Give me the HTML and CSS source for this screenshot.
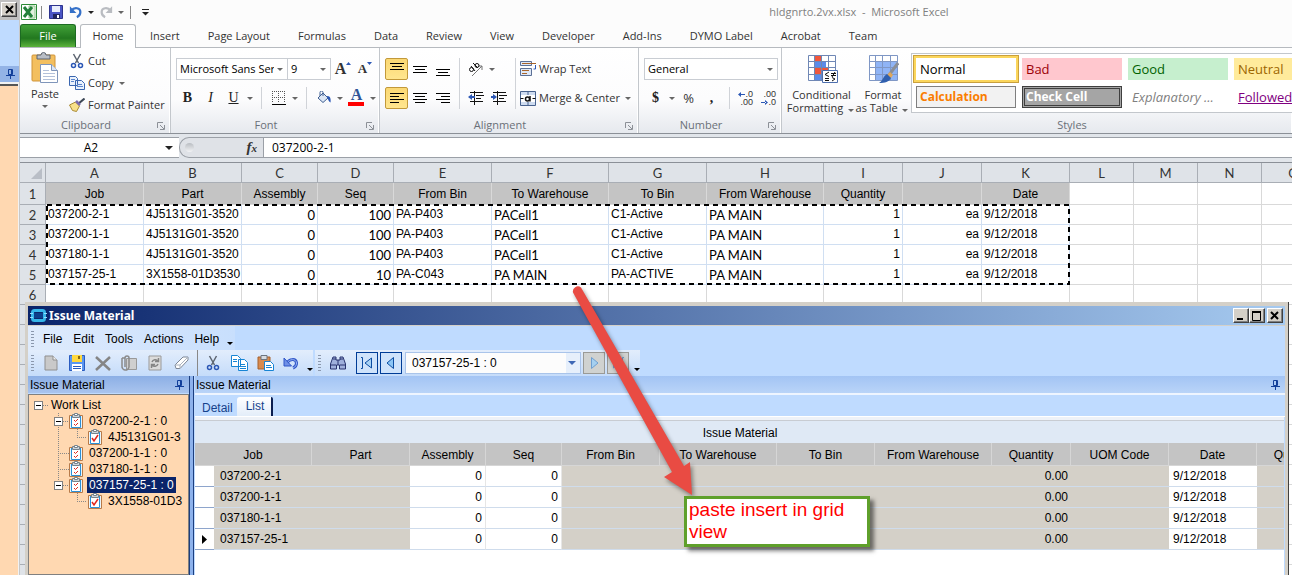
FILE: index.html
```
<!DOCTYPE html>
<html lang="en">
<head>
  <meta charset="UTF-8">
  <meta name="viewport" content="width=device-width, initial-scale=1.0">
  <title>hldgnrto.2vx.xlsx - Microsoft Excel</title>
  <link rel="stylesheet" href="styles.css">
</head>
<body>

<!-- shared icons -->
<svg class="defs" aria-hidden="true">
  <symbol id="pin" viewBox="0 0 9 10">
    <path d="M2.5 0.5h4v5h-4zM0 6.5h9M4.5 6v4M5.5 1v5" fill="none" stroke="#123f9a"/>
  </symbol>
  <symbol id="launcher" viewBox="0 0 8 8">
    <path d="M0.5 6V0.5H6" fill="none" stroke="#8c9097"/>
    <path d="M3 3l4 4M7.5 3v4.5H3" fill="none" stroke="#8c9097"/>
  </symbol>
  <symbol id="task" viewBox="0 0 14 16">
    <path d="M0.5 2.500h13v13h-13z" fill="#e9f6fd" stroke="#b87a48"/>
    <path d="M2.500 3v11.500h9V3" fill="#fff" stroke="#2b8fd6"/>
    <path d="M3.500 1.500h7v3h-7z" fill="#cfd6dc" stroke="#77838c"/>
    <path d="M5.500 0.500h3v2h-3z" fill="#fff" stroke="#77838c"/>
  </symbol>
  <symbol id="cut" viewBox="0 0 16 16">
    <path d="M4.500 1L9.500 10M11.500 1L6.500 10" stroke="#5c6470" stroke-width="1.500" fill="none"/>
    <circle cx="4.500" cy="12.500" r="2" fill="none" stroke="#2b57b5" stroke-width="1.500"/>
    <circle cx="11.500" cy="12.500" r="2" fill="none" stroke="#2b57b5" stroke-width="1.500"/>
  </symbol>
  <symbol id="undo" viewBox="0 0 16 16">
    <path d="M2.500 6.500C6 2 13 3 13 8c0 3-2 5-4 6" fill="none" stroke="currentColor" stroke-width="2.500"/>
    <path d="M1 1.500v7.500h7.500z" fill="currentColor"/>
  </symbol>
</svg>

<!-- docked strip on the left -->
<aside class="dock">
  <div class="dock-top"><button class="classic-btn" aria-label="Close"><svg width="9" height="9" viewBox="0 0 9 9"><path d="M1 1l7 7M8 1l-7 7" stroke="#000" stroke-width="2"/></svg></button></div>
  <div class="dock-blue"></div>
  <div class="dock-pin"><svg width="9" height="10"><use href="#pin"/></svg></div>
  <div class="dock-body"></div>
</aside>

<main class="excel">
  <header class="titlebar">
    <svg width="16" height="16" viewBox="0 0 16 16"><path d="M0.500 0.500h15v15H0.500z" fill="#fff" stroke="#2c8a36"/><path d="M8 2h6v12H8z" fill="#e3f1df" stroke="#8dc48a"/><path d="M3 3l8 10M11 3L3 13" stroke="#23803a" stroke-width="3"/></svg>
    <i class="qat-line"></i>
    <button aria-label="Save"><svg width="14" height="14" viewBox="0 0 14 14"><path d="M0.500 0.500h13v13H0.500z" fill="#4a55c4" stroke="#2d338c"/><path d="M3 1h8v6H3z" fill="#e8edfb"/><path d="M4 9h7v5H4z" fill="#20265e"/><path d="M8 10h2v3H8z" fill="#fff"/></svg></button>
    <button class="blue" aria-label="Undo"><svg width="14" height="14"><use href="#undo"/></svg></button>
    <i class="caret dark"></i>
    <button class="grey flip" aria-label="Redo"><svg width="14" height="14"><use href="#undo"/></svg></button>
    <i class="caret"></i>
    <i class="qat-line"></i>
    <button aria-label="Customize"><svg width="7" height="7" viewBox="0 0 7 7"><path d="M0 0.500h7" stroke="#222"/><path d="M0 3h7L3.500 6.500z" fill="#222"/></svg></button>
    <h1>hldgnrto.2vx.xlsx&nbsp; -&nbsp; Microsoft Excel</h1>
  </header>

  <nav class="tabs">
    <button class="file">File</button>
    <button class="active">Home</button>
    <button>Insert</button>
    <button>Page Layout</button>
    <button>Formulas</button>
    <button>Data</button>
    <button>Review</button>
    <button>View</button>
    <button>Developer</button>
    <button>Add-Ins</button>
    <button>DYMO Label</button>
    <button>Acrobat</button>
    <button>Team</button>
  </nav>

  <div class="ribbon">
    <section class="group clipboard">
      <div class="group-body">
        <button class="big paste">
          <svg width="28" height="32" viewBox="0 0 28 32"><rect x="1" y="3" width="23" height="26" rx="1" fill="#f3bf5f" stroke="#d0943a"/><path d="M6 3h4a2.500 2.500 0 0 1 5 0h4v4H6z" fill="#b9bec6" stroke="#5c6470"/><path d="M9.500 12.500h11l6 6v12h-17z" fill="#fff" stroke="#7f95ba"/><path d="M20.500 12.500v6h6" fill="#dce6f5" stroke="#7f95ba"/><path d="M12 18.500h6M12 21.500h12M12 24.500h12M12 27.500h12" stroke="#b3c1da"/></svg>
          <span>Paste</span><i class="caret"></i>
        </button>
        <div class="stack">
          <button><svg width="16" height="16"><use href="#cut"/></svg>Cut</button>
          <button><svg width="16" height="14" viewBox="0 0 16 14"><path d="M0.500 0.500h6l2 2v7h-8zM6.500 4.500h6l3 3v6h-9z" fill="#eaf1fc" stroke="#3a66b0"/><path d="M2 3.500h4M2 5.500h3M8 8.500h5M8 10.500h6" stroke="#5c86cc"/></svg>Copy <i class="caret"></i></button>
          <button><svg width="16" height="14" viewBox="0 0 16 14"><path d="M15.500 0.500L9 6" stroke="#3d4756" stroke-width="2"/><path d="M0.500 7l6-3 4 4-3 5.500-4-1z" fill="#f8e08a" stroke="#a88a34"/><path d="M7 3l4 4" stroke="#7a6bb0" stroke-width="2.500"/></svg>Format Painter</button>
        </div>
      </div>
      <h2>Clipboard<svg width="8" height="8"><use href="#launcher"/></svg></h2>
    </section>

    <section class="group font">
      <div class="group-body rows">
        <div class="row">
          <span class="combo family"><select aria-label="Font"><option>Microsoft Sans Serif</option></select></span>
          <span class="combo size"><select aria-label="Font size"><option>9</option></select></span>
          <button class="tool letter" aria-label="Grow font">A<svg width="5" height="3" viewBox="0 0 5 3"><path d="M0 3h5L2.500 0z" fill="#2b57b5"/></svg></button>
          <button class="tool letter small" aria-label="Shrink font">A<svg width="5" height="3" viewBox="0 0 5 3"><path d="M0 0h5L2.500 3z" fill="#2b57b5"/></svg></button>
        </div>
        <div class="row">
          <button class="tool serif"><b>B</b></button>
          <button class="tool serif"><em>I</em></button>
          <button class="tool serif"><u>U</u></button>
          <i class="caret"></i><i class="sep"></i>
          <button class="tool" aria-label="Borders"><svg width="14" height="14" viewBox="0 0 14 14"><path d="M0.500 0v12M6.500 0v12M12.500 0v12M0 0.500h13M0 6.500h13" stroke="#555" stroke-dasharray="1 1"/><path d="M0 13.500h14" stroke="#000"/></svg></button>
          <i class="caret"></i><i class="sep"></i>
          <button class="tool" aria-label="Fill color"><svg width="16" height="14" viewBox="0 0 16 14"><path d="M2 7l5-5 5 5-5 4.500z" fill="#dde7f5" stroke="#3f5f92"/><path d="M7 5V1.500a1.500 1.500 0 0 0-3 0V5" fill="none" stroke="#3f5f92"/><path d="M11 5c3 0 4 2 3.500 6.500C13 11 12 9 11 5z" fill="#2b57b5"/></svg></button>
          <i class="caret"></i>
          <button class="tool fontcolor" aria-label="Font color">A</button>
          <i class="caret"></i>
        </div>
      </div>
      <h2>Font<svg width="8" height="8"><use href="#launcher"/></svg></h2>
    </section>

    <section class="group align">
      <div class="group-body">
        <div class="rows">
          <div class="row">
            <button class="tool on" aria-label="Top align"><svg width="14" height="14" viewBox="0 0 14 14"><path d="M0 1.500h14M2 4.500h10M0 7.500h14" stroke="#000"/></svg></button>
            <button class="tool" aria-label="Middle align"><svg width="14" height="14" viewBox="0 0 14 14"><path d="M0 4.500h14M2 7.500h10M0 10.500h14" stroke="#000"/></svg></button>
            <button class="tool" aria-label="Bottom align"><svg width="14" height="14" viewBox="0 0 14 14"><path d="M0 7.500h14M2 10.500h10M0 13.500h14" stroke="#000"/></svg></button>
          </div>
          <div class="row">
            <button class="tool on" aria-label="Align left"><svg width="14" height="12" viewBox="0 0 14 12"><path d="M0 1.500h14M0 4.500h9M0 7.500h14M0 10.500h9" stroke="#000"/></svg></button>
            <button class="tool" aria-label="Center"><svg width="14" height="12" viewBox="0 0 14 12"><path d="M0 1.500h14M2 4.500h10M0 7.500h14M2 10.500h10" stroke="#000"/></svg></button>
            <button class="tool" aria-label="Align right"><svg width="14" height="12" viewBox="0 0 14 12"><path d="M0 1.500h14M5 4.500h9M0 7.500h14M5 10.500h9" stroke="#000"/></svg></button>
          </div>
        </div>
        <i class="sep tall"></i>
        <div class="rows">
          <div class="row">
            <button class="tool" aria-label="Orientation"><svg width="16" height="16" viewBox="0 0 16 16"><path d="M4 15L14 5M14 9V5h-4" stroke="#777" fill="none"/><circle cx="3.500" cy="8.500" r="2" fill="none" stroke="#111"/><path d="M3 5l4 5M5 2l5 5" stroke="#111"/><circle cx="9" cy="4.500" r="2" fill="none" stroke="#111"/></svg></button>
            <i class="caret"></i>
          </div>
          <div class="row">
            <button class="tool" aria-label="Decrease indent"><svg width="16" height="14" viewBox="0 0 16 14"><path d="M2 1.500h13M8 4.500h8M8 7.500h5M2 10.500h13M6.500 0v14" stroke="#111"/><path d="M0 6l4-3v6z" fill="#2b57b5"/><path d="M3 6h4" stroke="#2b57b5" stroke-width="2"/></svg></button>
            <button class="tool" aria-label="Increase indent"><svg width="16" height="14" viewBox="0 0 16 14"><path d="M2 1.500h13M8 4.500h8M8 7.500h5M2 10.500h13M6.500 0v14" stroke="#111"/><path d="M6 6L2 3v6z" fill="#2b57b5"/><path d="M0 6h3" stroke="#2b57b5" stroke-width="2"/></svg></button>
          </div>
        </div>
        <i class="sep tall"></i>
        <div class="rows">
          <button class="wide"><svg width="16" height="16" viewBox="0 0 16 16"><path d="M0.500 0.500h11v4H0.500zM0.500 7.500h11v7H0.500z" fill="#dfe8f6" stroke="#5b7097"/><path d="M2 2.500h14M2 9.500h7M2 12.500h5" stroke="#a8642a"/><path d="M15.500 4v4h-2" stroke="#2b57b5" fill="none"/></svg>Wrap Text</button>
          <button class="wide"><svg width="16" height="15" viewBox="0 0 16 15"><path d="M0.500 0.500h15v14H0.500zM8 0v4M8 11v4" fill="#cfdcf0" stroke="#49638f"/><path d="M1 4h14v7H1z" fill="#fff"/><path d="M0.500 7.500h3M12.500 7.500h3" stroke="#111"/><circle cx="7.500" cy="8" r="2" fill="none" stroke="#111" stroke-width="1.500"/><path d="M10 5v5.500" stroke="#111" stroke-width="1.500"/></svg>Merge &amp; Center <i class="caret"></i></button>
        </div>
      </div>
      <h2>Alignment<svg width="8" height="8"><use href="#launcher"/></svg></h2>
    </section>

    <section class="group number">
      <div class="group-body rows">
        <div class="row">
          <span class="combo format"><select aria-label="Number format"><option>General</option></select></span>
        </div>
        <div class="row">
          <button class="tool serif"><b>$</b></button>
          <i class="caret"></i>
          <button class="tool percent">%</button>
          <button class="tool serif"><b>,</b></button>
          <i class="sep"></i>
          <button class="tool decimal"><span><svg width="7" height="5" viewBox="0 0 7 5"><path d="M0 2.500L3 0v5zM2 2h5v1H2z" fill="#2b57b5"/></svg>.0</span><span>.00</span></button>
          <button class="tool decimal"><span>.00</span><span><svg width="7" height="5" viewBox="0 0 7 5"><path d="M7 2.500L4 0v5zM0 2h5v1H0z" fill="#2b57b5"/></svg>.0</span></button>
        </div>
      </div>
      <h2>Number<svg width="8" height="8"><use href="#launcher"/></svg></h2>
    </section>

    <section class="group styles">
      <div class="group-body">
        <button class="big conditional">
          <svg width="32" height="32" viewBox="0 0 32 32"><path d="M2.500 2.500h27v25h-27z" fill="#fff"/><path d="M9 2h7v7H9zM9 15h13v6H9z" fill="#f0563c"/><path d="M9 9h11v6H9zM9 21h8v6H9z" fill="#5b8bea"/><path d="M2.500 2.500h27v25h-27zM2 8.500h28M2 14.500h28M2 21.500h28M8.500 2v26M15.500 2v26M22.500 2v26" fill="none" stroke="#6f87b5"/><path d="M16.500 17.500h15v12h-15z" fill="#fff" stroke="#4d6fae"/><path d="M23 19l-4 2.500 4 2M19 25.500h4M25 20.500h5M25 22.500h5M29 19l-3 5M19 27.500h4M26 24.500l3 1.500-3 2" fill="none" stroke="#111"/></svg>
          <span>Conditional<br>Formatting <i class="caret"></i></span>
        </button>
        <button class="big table">
          <svg width="32" height="32" viewBox="0 0 32 32"><path d="M2.500 2.500h28v25h-28z" fill="#fff"/><path d="M9 9h21v19H9z" fill="#8fb4f6"/><path d="M2.500 2.500h28v25h-28zM2 8.500h28M2 14.500h28M2 21.500h28M8.500 2v26M15.500 2v26M23.500 2v26" fill="none" stroke="#7f97c5"/><path d="M31 10L22 22" stroke="#8a8f98" stroke-width="3"/><path d="M23 19l3 3-2 3-4-3z" fill="#e0a85c"/><path d="M20 21l4 4c-2 4-6 5-12 5 4-2 4-7 8-9z" fill="#2f5fae"/></svg>
          <span>Format<br>as Table <i class="caret"></i></span>
        </button>
        <div class="gallery">
          <button class="st normal">Normal</button>
          <button class="st bad">Bad</button>
          <button class="st good">Good</button>
          <button class="st neutral">Neutral</button>
          <button class="st calc">Calculation</button>
          <button class="st check">Check Cell</button>
          <button class="st explain">Explanatory ...</button>
          <button class="st followed">Followed</button>
        </div>
      </div>
      <h2>Styles</h2>
    </section>
  </div>

  <div class="formula">
    <label class="namebox"><input type="text" value="A2" aria-label="Name box"><i class="caret dark"></i></label>
    <div class="fx"><i class="knob"></i><span>f<small>x</small></span></div>
    <input class="value" type="text" value="037200-2-1" aria-label="Formula">
  </div>

  <div class="sheet-wrap">
    <table class="sheet">
      <colgroup>
        <col class="w26"><col class="w98"><col class="w98"><col class="w76"><col class="w76"><col class="w98"><col class="w117"><col class="w98"><col class="w117"><col class="w79"><col class="w79"><col class="w88"><col class="w64"><col class="w64"><col class="w64"><col class="w64">
      </colgroup>
      <thead>
        <tr><th class="corner"><svg width="11" height="11" viewBox="0 0 11 11"><path d="M11 0v11H0z" fill="#b9bec6"/></svg></th><th>A</th><th>B</th><th>C</th><th>D</th><th>E</th><th>F</th><th>G</th><th>H</th><th>I</th><th>J</th><th>K</th><th>L</th><th>M</th><th>N</th><th>O</th></tr>
      </thead>
      <tbody>
        <tr class="heads"><th>1</th><td>Job</td><td>Part</td><td>Assembly</td><td>Seq</td><td>From Bin</td><td>To Warehouse</td><td>To Bin</td><td>From Warehouse</td><td>Quantity</td><td></td><td>Date</td><td class="e"></td><td class="e"></td><td class="e"></td><td class="e"></td></tr>
        <tr class="data"><th>2</th><td>037200-2-1</td><td>4J5131G01-3520</td><td class="plain num">0</td><td class="plain num">100</td><td>PA-P403</td><td class="plain">PACell1</td><td>C1-Active</td><td class="plain">PA MAIN</td><td class="num">1</td><td class="num">ea</td><td>9/12/2018</td><td class="e"></td><td class="e"></td><td class="e"></td><td class="e"></td></tr>
        <tr class="data"><th>3</th><td>037200-1-1</td><td>4J5131G01-3520</td><td class="plain num">0</td><td class="plain num">100</td><td>PA-P403</td><td class="plain">PACell1</td><td>C1-Active</td><td class="plain">PA MAIN</td><td class="num">1</td><td class="num">ea</td><td>9/12/2018</td><td class="e"></td><td class="e"></td><td class="e"></td><td class="e"></td></tr>
        <tr class="data"><th>4</th><td>037180-1-1</td><td>4J5131G01-3520</td><td class="plain num">0</td><td class="plain num">100</td><td>PA-P403</td><td class="plain">PACell1</td><td>C1-Active</td><td class="plain">PA MAIN</td><td class="num">1</td><td class="num">ea</td><td>9/12/2018</td><td class="e"></td><td class="e"></td><td class="e"></td><td class="e"></td></tr>
        <tr class="data"><th>5</th><td>037157-25-1</td><td>3X1558-01D3530</td><td class="plain num">0</td><td class="plain num">10</td><td>PA-C043</td><td class="plain">PA MAIN</td><td>PA-ACTIVE</td><td class="plain">PA MAIN</td><td class="num">1</td><td class="num">ea</td><td>9/12/2018</td><td class="e"></td><td class="e"></td><td class="e"></td><td class="e"></td></tr>
        <tr><th>6</th><td></td><td></td><td></td><td></td><td></td><td></td><td></td><td></td><td></td><td></td><td></td><td></td><td></td><td></td><td></td></tr>
        <tr><th></th><td colspan="15"></td></tr>
        <tr><th></th><td colspan="15"></td></tr>
        <tr><th></th><td colspan="15"></td></tr>
        <tr><th></th><td colspan="15"></td></tr>
        <tr><th></th><td colspan="15"></td></tr>
        <tr><th></th><td colspan="15"></td></tr>
        <tr><th></th><td colspan="15"></td></tr>
        <tr><th></th><td colspan="15"></td></tr>
        <tr><th></th><td colspan="15"></td></tr>
        <tr><th></th><td colspan="15"></td></tr>
        <tr><th></th><td colspan="15"></td></tr>
        <tr><th></th><td colspan="15"></td></tr>
        <tr><th></th><td colspan="15"></td></tr>
        <tr><th></th><td colspan="15"></td></tr>
      </tbody>
    </table>
    <!-- copied range outline -->
    <svg class="ants" width="1024" height="81"><rect x="1" y="1" width="1022" height="79" fill="none" stroke="#000" stroke-width="2" stroke-dasharray="5 4"/></svg>
  </div>
</main>

<!-- Issue Material window -->
<section class="window">
  <header class="win-title">
    <svg width="17" height="13" viewBox="0 0 17 13"><rect x="2.500" y="1.500" width="12" height="10" rx="2" fill="none" stroke="#35b5e8" stroke-width="3"/><path d="M0 4.500h3M0 8.500h3M14 4.500h3M14 8.500h3" stroke="#8fe0ff"/><rect x="4" y="4" width="9" height="5" fill="#0d3f8a"/></svg>
    <h2>Issue Material</h2>
    <button class="classic-btn" aria-label="Minimize"><svg width="10" height="10" viewBox="0 0 10 10"><path d="M1 8h6" stroke="#000" stroke-width="2"/></svg></button>
    <button class="classic-btn" aria-label="Maximize"><svg width="10" height="10" viewBox="0 0 10 10"><path d="M0.500 1v8.500h8V1M0 1h9" stroke="#000" fill="none"/><path d="M0 1h9" stroke="#000" stroke-width="2"/></svg></button>
    <button class="classic-btn last" aria-label="Close"><svg width="10" height="10" viewBox="0 0 10 10"><path d="M1 1l7 7M8 1l-7 7" stroke="#000" stroke-width="2"/></svg></button>
  </header>

  <nav class="menu">
    <div class="menu-in"><i class="grip"></i>
      <button>File</button><button>Edit</button><button>Tools</button><button>Actions</button><button>Help</button><i class="more"></i>
    </div>
  </nav>

  <div class="toolbar">
    <div class="bar"><i class="grip"></i>
      <button aria-label="New"><svg width="14" height="16" viewBox="0 0 14 16"><path d="M1 1h8l4 4v10H1z" fill="#c9c9c9" stroke="#8f8f8f"/><path d="M9 1v4h4" fill="#eee" stroke="#8f8f8f"/></svg></button>
      <button aria-label="Save"><svg width="16" height="16" viewBox="0 0 16 16"><path d="M0.500 0.500h15v15H0.500z" fill="#5a96f0" stroke="#2a5cc0"/><path d="M3 0h10v7H3z" fill="#ffd83d"/><path d="M9 1h2v3H9z" fill="#8a6a10"/><path d="M3 9h10v7H3z" fill="#fff"/><path d="M4 11.500h8M4 13.500h8" stroke="#2a5cc0"/></svg></button>
      <button aria-label="Delete"><svg width="16" height="15" viewBox="0 0 16 15"><path d="M1 1l14 13M15 1L1 14" stroke="#858585" stroke-width="2.500"/></svg></button>
      <button aria-label="Attach"><svg width="16" height="16" viewBox="0 0 16 16"><path d="M5.500 3.500h10v11h-10z" fill="#cfcfcf" stroke="#999"/><path d="M4 12V3a2 2 0 0 1 4 0v9M1 3v8a3.500 3.500 0 0 0 7 1M1 3h3" fill="none" stroke="#8a8a8a" stroke-width="1.500"/></svg></button>
      <button aria-label="Refresh"><svg width="14" height="16" viewBox="0 0 14 16"><path d="M1 1h12v14H1z" fill="#dcdcdc" stroke="#999"/><path d="M4 7a3.500 3.500 0 0 1 6-1M10 9a3.500 3.500 0 0 1-6 1M10.500 3v3.500H7M3.500 13V9.500H7" fill="none" stroke="#858585" stroke-width="1.500"/></svg></button>
      <button aria-label="Clear"><svg width="15" height="14" viewBox="0 0 15 14"><path d="M1 9l8-8h5v3l-8 8.500H2z" fill="#fff" stroke="#7d8796"/><path d="M1 9h5l8-8M6 9v3.500" fill="none" stroke="#a9b2bf"/></svg></button>
      <i class="tsep"></i>
      <button aria-label="Cut"><svg width="16" height="16"><use href="#cut"/></svg></button>
      <button aria-label="Copy"><svg width="17" height="16" viewBox="0 0 17 16"><path d="M0.500 0.500h6l3 3v8h-9zM7.500 4.500h6l3 3v8h-9z" fill="#fff" stroke="#1784d4"/><path d="M2 4.500h4M2 6.500h4M9 9.500h5M9 11.500h6M9 13.500h6" stroke="#1784d4"/></svg></button>
      <button aria-label="Paste"><svg width="17" height="16" viewBox="0 0 17 16"><path d="M1 2h12v12H1z" fill="#d98b4f" stroke="#a5602a"/><path d="M4 0.500h6v4H4z" fill="#d7dbe0" stroke="#6c7580"/><path d="M7.500 6.500h6l3 3v6h-9z" fill="#fff" stroke="#1784d4"/><path d="M9 10.500h5M9 12.500h6" stroke="#1784d4"/></svg></button>
      <button aria-label="Undo"><svg width="16" height="14" viewBox="0 0 16 14"><path d="M4 7C6 3 13 2 13.500 7c0 2-1 4-3.500 5" fill="none" stroke="#2f55c8" stroke-width="3"/><path d="M4 7C6 3 13 2 13.500 7c0 2-1 4-3.500 5" fill="none" stroke="#9db8f5"/><path d="M1 2v8h7.500z" fill="#6f90e6" stroke="#2f55c8"/></svg></button>
      <i class="more"></i>
    </div>
    <div class="bar"><i class="grip"></i>
      <button class="find" aria-label="Search"><svg width="16" height="14" viewBox="0 0 16 14"><path d="M3 1h3v3h4V1h3l2.500 7v5h-6V9h-3v4h-6V8z" fill="#9fb0dc" stroke="#28336e"/><path d="M3 3h3M10 3h3M1 9h5M10 9h5M8 4v5" stroke="#28336e"/></svg></button>
      <button class="nav" aria-label="First"><svg width="12" height="12" viewBox="0 0 12 12"><path d="M0 0.500h1.500v11H0" fill="none" stroke="#0c4da2"/><path d="M10.500 1v10L4 6z" fill="#a9d3f5" stroke="#0c4da2"/></svg></button>
      <button class="nav" aria-label="Previous"><svg width="12" height="12" viewBox="0 0 12 12"><path d="M8.500 0.500v11L2 6z" fill="#8cc6f5" stroke="#0c4da2"/></svg></button>
      <span class="combo record"><select aria-label="Job"><option>037157-25-1 : 0</option></select></span>
      <button class="nav off" aria-label="Next"><svg width="12" height="12" viewBox="0 0 12 12"><path d="M3.500 0.500v11L10 6z" fill="#a5d0f0" stroke="#6f9fd0"/></svg></button>
      <button class="nav off" aria-label="Last"><svg width="12" height="12" viewBox="0 0 12 12"><path d="M1.500 1v10L8 6z" fill="#a5d0f0" stroke="#6f9fd0"/><path d="M12 0.500h-1.500v11H12" fill="none" stroke="#6f9fd0"/></svg></button>
      <i class="more"></i>
    </div>
  </div>

  <div class="panes">
    <div class="left">
      <h3>Issue Material<svg width="9" height="10"><use href="#pin"/></svg></h3>
      <ul class="tree">
        <li class="root"><i class="box"></i><span>Work List</span></li>
        <li class="job"><i class="box"></i><svg width="14" height="16"><use href="#task"/><path d="M5 7l1.500 1.500L9 6M5 11l1.500 1.500L9 10" stroke="#e0261c" fill="none"/></svg><span>037200-2-1 : 0</span></li>
        <li class="part"><svg width="14" height="16"><use href="#task"/><path d="M4 9l2 3 4-6" stroke="#e0261c" stroke-width="1.500" fill="none"/></svg><span>4J5131G01-3</span></li>
        <li class="job"><i class="dots"></i><svg width="14" height="16"><use href="#task"/><path d="M5 7l1.500 1.500L9 6M5 11l1.500 1.500L9 10" stroke="#e0261c" fill="none"/></svg><span>037200-1-1 : 0</span></li>
        <li class="job"><i class="dots"></i><svg width="14" height="16"><use href="#task"/><path d="M5 7l1.500 1.500L9 6M5 11l1.500 1.500L9 10" stroke="#e0261c" fill="none"/></svg><span>037180-1-1 : 0</span></li>
        <li class="job end"><i class="box"></i><svg width="14" height="16"><use href="#task"/><path d="M5 7l1.500 1.500L9 6M5 11l1.500 1.500L9 10" stroke="#e0261c" fill="none"/></svg><span class="sel">037157-25-1 : 0</span></li>
        <li class="part end"><svg width="14" height="16"><use href="#task"/><path d="M4 9l2 3 4-6" stroke="#e0261c" stroke-width="1.500" fill="none"/></svg><span>3X1558-01D3</span></li>
      </ul>
    </div>
    <i class="splitter"></i>
    <div class="right">
      <h3>Issue Material<svg width="9" height="10"><use href="#pin"/></svg></h3>
      <div class="subtabs"><button>Detail</button><button class="active">List</button></div>
      <div class="grid-wrap">
        <table class="grid">
          <caption>Issue Material</caption>
          <colgroup>
            <col class="w19"><col class="w98"><col class="w98"><col class="w76"><col class="w76"><col class="w98"><col class="w117"><col class="w98"><col class="w117"><col class="w79"><col class="w98"><col class="w88"><col class="w79">
          </colgroup>
          <thead>
            <tr><th colspan="2">Job</th><th>Part</th><th>Assembly</th><th>Seq</th><th>From Bin</th><th>To Warehouse</th><th>To Bin</th><th>From Warehouse</th><th>Quantity</th><th>UOM Code</th><th>Date</th><th>Quantity</th></tr>
          </thead>
          <tbody>
            <tr><td class="mark"></td><td>037200-2-1</td><td></td><td class="edit">0</td><td class="edit">0</td><td></td><td></td><td></td><td></td><td class="qty">0.00</td><td></td><td class="date">9/12/2018</td><td></td></tr>
            <tr><td class="mark"></td><td>037200-1-1</td><td></td><td class="edit">0</td><td class="edit">0</td><td></td><td></td><td></td><td></td><td class="qty">0.00</td><td></td><td class="date">9/12/2018</td><td></td></tr>
            <tr><td class="mark"></td><td>037180-1-1</td><td></td><td class="edit">0</td><td class="edit">0</td><td></td><td></td><td></td><td></td><td class="qty">0.00</td><td></td><td class="date">9/12/2018</td><td></td></tr>
            <tr><td class="mark"><svg width="5" height="9" viewBox="0 0 5 9"><path d="M0 0v9l5-4.500z" fill="#000"/></svg></td><td>037157-25-1</td><td></td><td class="edit">0</td><td class="edit">0</td><td></td><td></td><td></td><td></td><td class="qty">0.00</td><td></td><td class="date">9/12/2018</td><td></td></tr>
          </tbody>
        </table>
      </div>
    </div>
  </div>
</section>

<!-- annotation -->
<svg class="arrow" width="150" height="225" viewBox="0 0 150 225"><path d="M21 7.500L124 186 130 182 132 215 104 197 112 192 13 12.500A5 5 0 0 1 21 7.500z" fill="#e94b43"/></svg>
<p class="callout">paste insert in grid view</p>

</body>
</html>
```
FILE: styles.css
```
*{
  box-sizing: border-box;
}
html,body{
  height: 100%;
  margin: 0;
  overflow: hidden;
}
body{
  position: relative;
  display: flex;
  background: #fff;
  font: 12px/16px "Liberation Sans", sans-serif;
  color: #000;
}
button,input,select{
  font: inherit;
  color: inherit;
  border: 0;
  padding: 0;
  margin: 0;
  background: none;
  border-radius: 0;
}
button{
  display: flex;
  align-items: center;
  justify-content: center;
  white-space: nowrap;
}
h1,h2,h3,p,ul{
  margin: 0;
  padding: 0;
  font-weight: normal;
  font-size: inherit;
}
svg{
  display: block;
  flex: none;
}
.defs{
  position: absolute;
  width: 0;
  height: 0;
}
.caret{
  flex: none;
  display: flex;
  align-items: center;
  justify-content: center;
  width: 10px;
}
.caret::after,.combo::after{
  content: "";
  border: 3px solid transparent;
  border-top-color: #666;
  border-bottom: 0;
}
.caret.dark::after{
  border-top-color: #222;
}
.namebox .caret::after{
  border-width: 4px 4px 0;
}
.blue{
  color: #3470c8;
}
.grey{
  color: #b9bcc1;
}
.flip svg{
  transform: scaleX(-1);
}

/* column widths */
.w19{ width: 19px; }
.w26{ width: 26px; }
.w64{ width: 64px; }
.w76{ width: 76px; }
.w79{ width: 79px; }
.w88{ width: 88px; }
.w98{ width: 98px; }
.w117{ width: 117px; }

/* dock */
.dock{
  flex: none;
  display: flex;
  flex-direction: column;
  width: 20px;
  border-right: 1px solid #c8c8c8;
  background: #f2f2f2;
}
.dock-top{
  height: 20px;
  padding: 2px 1px;
  background: #c0c0c0;
}
.classic-btn{
  width: 16px;
  height: 15px;
  background: #d4d0c8;
  border: 1px solid;
  border-color: #fff #404040 #404040 #fff;
  box-shadow: inset -1px -1px #808080;
}
.dock-blue{
  height: 46px;
  background: #bfdbff;
}
.dock-pin{
  display: flex;
  align-items: center;
  padding-left: 6px;
  height: 16px;
  background: #93b3e6;
}
.dock-body{
  flex: 1;
  margin: 2px 1px 0 0;
  background: #ffd8b1;
  border-top: 2px solid #555;
}

/* excel frame */
.excel{
  flex: 1;
  min-width: 0;
  display: flex;
  flex-direction: column;
  font-family: "Open Sans", sans-serif;
  font-size: 11px;
  color: #333;
}
.titlebar{
  display: flex;
  align-items: center;
  height: 24px;
  padding-left: 1px;
  background: #fcfcfc;
}
.titlebar button{
  width: 20px;
}
.titlebar h1{
  flex: 1;
  padding-left: 271px;
  text-align: center;
  color: #808080;
}
.qat-line{
  width: 1px;
  height: 13px;
  margin: 0 4px;
  background: #888;
}
.tabs{
  display: flex;
  height: 24px;
  background: #fcfcfc;
  border-bottom: 1px solid #b6babf;
}
.tabs button{
  padding: 0 14px;
}
.tabs .file{
  width: 56px;
  margin-right: 4px;
  color: #fff;
  border-radius: 3px 3px 0 0;
  border: 1px solid #1c6b22;
  border-bottom: 0;
  background: linear-gradient(#41a038, #22781f 60%, #5cb33c);
}
.tabs .active{
  width: 56px;
  height: 24px;
  padding: 0 0 2px;
  border: 1px solid #b6babf;
  border-bottom: 0;
  border-radius: 3px 3px 0 0;
  background: #fff;
}

/* ribbon */
.ribbon{
  display: flex;
  height: 86px;
  background: linear-gradient(#fff, #fcfcfd 60%, #e6e9ee);
  border-bottom: 1px solid #8b9097;
}
.group{
  position: relative;
  flex: none;
  display: flex;
  flex-direction: column;
  border-right: 1px solid #c3c7cc;
  box-shadow: inset -1px 0 #fff;
}
.group h2{
  display: flex;
  align-items: center;
  justify-content: center;
  height: 16px;
  padding-right: 18px;
  color: #6a7078;
}
.group h2 svg{
  position: absolute;
  right: 5px;
  bottom: 3px;
}
.group-body{
  flex: 1;
  display: flex;
  padding: 10px 0 0 5px;
}
.rows{
  display: flex;
  flex-direction: column;
  gap: 7px;
}
.rows > *{
  flex: none;
}
.row{
  display: flex;
  height: 22px;
}
.clipboard{ width: 151px; }
.font{ width: 209px; }
.align{ width: 259px; }
.number{ width: 143px; }
.styles{
  flex: 1;
  min-width: 0;
  overflow: hidden;
  border-right: 0;
}
.styles h2{
  padding: 0 0 0 70px;
}
.clipboard .group-body{
  padding-top: 2px;
}
.big{
  flex-direction: column;
  justify-content: flex-start;
  line-height: 13px;
}
.big .caret{
  display: inline-flex;
  height: 6px;
}
.paste{
  width: 40px;
  margin-right: 4px;
  padding-top: 2px;
  gap: 3px;
}
.stack button{
  height: 22px;
  gap: 3px;
}
.tool{
  width: 23px;
  height: 22px;
}
.tool.on{
  border: 1px solid #c2993a;
  border-radius: 2px;
  background: linear-gradient(#fbd873, #ffe68f);
}
.sep{
  width: 12px;
  background: linear-gradient(#d0d3d8, #d0d3d8) center / 1px 100% no-repeat;
}
.sep.tall{
  width: 10px;
  height: 51px;
}
.serif{
  font: 14px/20px "Liberation Serif", serif;
  color: #222;
}
.letter{
  width: 20px;
  margin-left: 2px;
  align-items: flex-start;
  font: bold 16px/22px "Liberation Serif", serif;
}
.letter.small{
  font-size: 13px;
}
.letter svg{
  margin-top: 4px;
}
.fontcolor{
  position: relative;
  font: bold 16px/16px "Liberation Serif", serif;
  color: #2f5597;
  align-items: flex-start;
}
.fontcolor::after{
  content: "";
  position: absolute;
  left: 3px;
  right: 4px;
  bottom: 3px;
  height: 4px;
  background: #f00;
}
.percent{
  font-size: 13px;
}
.decimal{
  flex-direction: column;
  align-items: flex-end;
  padding-right: 5px;
  font: 9px/8px "Liberation Sans", sans-serif;
}
.decimal span{
  display: flex;
  align-items: center;
}
.wide{
  height: 22px;
  gap: 3px;
  align-self: flex-start;
}
.combo{
  display: flex;
  align-items: center;
  height: 22px;
  border: 1px solid #c9cdd3;
  background: #fff;
  padding-right: 4px;
}
.combo select{
  flex: 1;
  min-width: 0;
  height: 20px;
  padding-left: 3px;
  appearance: none;
  outline: 0;
  color: #000;
}
.family{ width: 112px; }
.family select{
  margin-right: 3px;
}
.size{
  width: 43px;
  border-left: 0;
}
.format{ width: 134px; }
.styles .group-body{
  padding: 5px 0 0 5px;
}
.conditional{ width: 69px; }
.table{ width: 54px; margin-right: 1px; }
.big svg{
  margin-bottom: 3px;
}
.paste svg{
  margin: 0;
}
.conditional span,.table span{
  line-height: 13px;
  text-align: center;
}
.gallery{
  flex: none;
  display: grid;
  grid-template-columns: repeat(4, 100px);
  grid-auto-rows: 22px;
  gap: 6px;
  height: 60px;
  padding: 4px 4px 0 4px;
  border: 1px solid #c3c7cc;
  border-right: 0;
  background: #fff;
}
.st{
  justify-content: flex-start;
  padding-left: 4px;
  font-size: 13px;
}
.normal{
  color: #000;
  background: #fff;
  outline: 2px solid #fbd65c;
  box-shadow: 0 0 0 3px #c9a03e;
}
.bad{ background: #ffc7ce; color: #9c0006; }
.good{ background: #c6efce; color: #006100; }
.neutral{ background: #ffeb9c; color: #9c6500; }
.calc{
  border: 1px solid #7f7f7f;
  padding-left: 3px;
  background: #f2f2f2;
  color: #fa7d00;
  font-size: 12px;
  font-weight: bold;
}
.check{
  border: 3px double #3f3f3f;
  padding-left: 1px;
  background: #a5a5a5;
  color: #fff;
  font-size: 12px;
  font-weight: bold;
}
.explain{
  color: #7f7f7f;
  font-style: italic;
}
.followed{
  color: #800080;
  text-decoration: underline;
}

/* formula bar */
.formula{
  display: flex;
  height: 29px;
  padding: 3px 0 4px;
  background: #e1e5ea;
  border-bottom: 1px solid #8b9097;
  font-size: 12px;
  color: #000;
}
.namebox,.formula .value,.fx{
  border: solid #9ba0a7;
  border-width: 1px 0;
  background: #fff;
}
.namebox{
  display: flex;
  width: 159px;
}
.namebox input{
  flex: 1;
  min-width: 0;
  padding-left: 3px;
  text-align: center;
}
.namebox .caret{
  width: 20px;
}
.fx{
  display: flex;
  align-items: center;
  justify-content: space-between;
  width: 84px;
  padding: 0 6px 0 5px;
  border-left-width: 1px;
  border-radius: 10px 0 0 10px;
  background: #dfe2e7;
  font: italic bold 15px/18px "Liberation Serif", serif;
  color: #333;
}
.fx small{
  font-size: 11px;
}
.knob{
  width: 9px;
  height: 9px;
  border-radius: 5px;
  background: linear-gradient(#b9bdc2, #f2f3f5);
}
.formula .value{
  flex: 1;
  min-width: 0;
  padding-left: 8px;
  border-left-width: 1px;
}

/* sheet */
.sheet-wrap{
  position: relative;
  flex: 1;
  min-height: 0;
  overflow: hidden;
}
.sheet,.grid{
  table-layout: fixed;
  border-collapse: separate;
  border-spacing: 0;
}
.sheet{
  width: 1306px;
}
.sheet td,.sheet th{
  height: 20px;
  padding: 0 2px;
  overflow: hidden;
  white-space: nowrap;
  line-height: 16px;
  border: solid #d9d9d9;
  border-width: 0 1px 1px 0;
}
.sheet th{
  padding: 0;
  background: #dfe3e8;
  border-color: #a9aeb5;
  font: 13px/18px Lato, sans-serif;
  color: #333;
}
.sheet tbody th{
  padding-top: 1px;
}
.sheet .corner svg{
  margin: 1px 3px 0 auto;
}
.heads td{
  background: #c4c4c4;
  border-color: #d9d9d9;
  text-align: center;
  font: 12px/16px "Liberation Sans", sans-serif;
  color: #000;
}
.sheet .heads td,.sheet .heads th{
  height: 22px;
}
.sheet .e{
  background: #fff;
}
.sheet .data td{
  padding-top: 1px;
  font: 12px/16px "Liberation Sans", sans-serif;
  color: #000;
  vertical-align: top;
}
.sheet .data td:not(.e){
  border-color: #d0dff2;
}
.sheet .data .plain{
  font: 13px/18px Lato, sans-serif;
  border-color: #fff;
}
.sheet .data .num{
  text-align: right;
}
.ants{
  position: absolute;
  left: 26px;
  top: 41px;
}

/* issue material window */
.window{
  position: absolute;
  left: 25px;
  right: 4px;
  top: 302px;
  bottom: 0;
  display: flex;
  flex-direction: column;
  border: solid #d4d0c8;
  border-width: 4px 3px 0;
  background: #bfdbff;
  box-shadow: 1px 0 #404040;
}
.win-title{
  display: flex;
  align-items: center;
  height: 20px;
  padding: 0 2px;
  background: linear-gradient(90deg, #0a246a, #a6caf0);
  border-bottom: 1px solid #d4d0c8;
}
.win-title h2{
  flex: 1;
  padding-left: 2px;
  font: bold 12px/18px "Noto Sans", sans-serif;
  color: #fff;
}
.win-title .last{
  margin-left: 2px;
}
.menu{
  display: flex;
  height: 24px;
}
.menu-in,.bar{
  display: flex;
  align-items: center;
  background: linear-gradient(90deg, #dfebfc, #c8dffd);
}
.menu-in{
  gap: 11px;
  padding: 2px 2px 0 3px;
}
.grip{
  width: 3px;
  height: 16px;
  background: repeating-linear-gradient(#8b98ad 0 1px, transparent 1px 3px);
}
.menu .grip{
  margin-right: -2px;
}
.more{
  align-self: flex-end;
  border: 3px solid transparent;
  border-top-color: #000;
  border-bottom: 0;
  margin-bottom: 5px;
}
.menu .more{
  margin-left: -3px;
}
.toolbar{
  display: flex;
  gap: 2px;
  height: 26px;
}
.bar{
  padding: 0 0 0 3px;
  background: linear-gradient(#e2edfc, #c5dcfa);
}
.bar .more{
  margin-left: 3px;
}
.bar button{
  width: 26px;
  height: 24px;
}
.bar .grip{
  margin-right: 4px;
}
.tsep{
  width: 6px;
  height: 26px;
  background: linear-gradient(#888, #888) 3px 0 / 1px 100% no-repeat;
}
.bar .find{
  margin-right: 5px;
}
.bar .nav{
  width: 22px;
  height: 22px;
  margin-right: 2px;
  border: 1px solid #003c96;
  background: #cfe3fb;
}
.bar .off{
  border-color: #9a9a96;
  background: #d0d2d0;
}
.record{
  width: 176px;
  margin: 0 2px 0 1px;
  border-color: #a9c4ea;
  background: linear-gradient(90deg, #fcfcfc 160px, #e6effb 160px);
}
.record::after{
  border-width: 4px 4px 0;
  border-top-color: #3e68b5;
}
.record select{
  padding-left: 6px;
}
.panes{
  flex: 1;
  min-height: 0;
  display: flex;
}
.left{
  flex: none;
  width: 161px;
  display: flex;
  flex-direction: column;
}
.panes h3{
  flex: none;
  display: flex;
  align-items: center;
  justify-content: space-between;
  height: 17px;
  padding: 1px 5px 0 2px;
}
.left h3{
  background: linear-gradient(#8cafe5, #a9c4ee);
}
.right h3{
  padding-left: 1px;
  background: linear-gradient(#a3c4f4, #b9d4f8);
}
.tree{
  flex: 1;
  margin-top: 1px;
  padding: 2px 0 0 5px;
  overflow: hidden;
  list-style: none;
  background: #ffd8b1;
  border: solid #404040;
  border-width: 1px 0 0 1px;
  outline: 1px solid #808080;
  outline-offset: -1px;
}
.tree li{
  display: flex;
  align-items: center;
  height: 16px;
  white-space: nowrap;
}
.tree svg{
  margin-right: 4px;
}
.tree span{
  padding: 0 2px;
}
.tree .sel{
  background: #0a246a;
  color: #fff;
}
.tree .job{
  padding-left: 20px;
}
.tree .part{
  padding-left: 54px;
}
.job,.part{
  background: repeating-linear-gradient(#888 0 1px, transparent 1px 2px) 24px 0 / 1px 100% no-repeat;
}
.job.end{
  background-size: 1px 8px;
}
.part{
  background: repeating-linear-gradient(#888 0 1px, transparent 1px 2px) 24px 0 / 1px 100% no-repeat, repeating-linear-gradient(#888 0 1px, transparent 1px 2px) 43px 0 / 1px 9px no-repeat, repeating-linear-gradient(90deg, #888 0 1px, transparent 1px 2px) 43px 8px / 10px 1px no-repeat;
}
.part.end{
  background-size: 0 0, 1px 9px, 10px 1px;
}
.box,.dots{
  flex: none;
  width: 15px;
  height: 9px;
}
.box{
  background: linear-gradient(#000, #000) 2px 4px / 5px 1px no-repeat, linear-gradient(#fff, #fff) 1px 1px / 7px 7px no-repeat, linear-gradient(#808080, #808080) 0 0 / 9px 9px no-repeat, repeating-linear-gradient(90deg, #888 0 1px, transparent 1px 2px) 9px 4px / 6px 1px no-repeat;
}
.dots{
  background: repeating-linear-gradient(90deg, #888 0 1px, transparent 1px 2px) 4px 4px / 11px 1px no-repeat;
}
.splitter{
  flex: none;
  width: 5px;
  margin-right: 1px;
  background: #8db2ec;
  border: solid #1c3f80;
  border-width: 0 1px;
}
.right{
  flex: 1;
  min-width: 0;
  display: flex;
  flex-direction: column;
}
.subtabs{
  flex: none;
  display: flex;
  height: 24px;
  padding: 2px 0 0;
  border-top: 2px solid #eef5ff;
  border-bottom: 1px solid #fff;
  color: #15428b;
}
.subtabs button{
  padding: 2px 4px 0 7px;
}
.subtabs .active{
  padding: 0 7px 1px 9px;
  background: linear-gradient(#fff, #e3edf9);
  border-right: 2px solid #0a1e50;
  border-radius: 3px 2px 0 0;
}
.grid-wrap{
  flex: 1;
  min-height: 0;
  overflow: hidden;
  margin-right: 1px;
  border-top: 3px solid #eef2f8;
  background: #fff;
}
.grid{
  width: 1141px;
}
.grid caption{
  height: 23px;
  width: 1090px;
  padding-top: 4px;
  border-top: 1px solid #c8ccd2;
  background: #dfe9f5;
}
.grid th{
  height: 23px;
  padding: 1px 0 0;
  background: #c4c4c4;
  border: solid #d6d6d6;
  border-width: 0 1px 1px 0;
  font-weight: normal;
}
.grid td{
  height: 21px;
  padding: 0 6px;
  line-height: 16px;
  background: #d4d0c8;
  border-bottom: 1px solid #cfdcec;
}
.grid .mark{
  padding: 0 7px;
  background: #fff;
  border-bottom-color: #8ea5cc;
}
.grid .edit{
  background: #fff;
  border-right: 1px solid #e6e6e6;
  text-align: right;
  padding-right: 3px;
}
.grid .qty{
  text-align: right;
  padding-right: 3px;
}
.grid .date{
  background: #fff;
  padding-left: 4px;
}

/* annotation */
.arrow{
  position: absolute;
  left: 560px;
  top: 280px;
  filter: drop-shadow(2px 3px 2px rgba(0, 0, 0, .4));
}
.callout{
  position: absolute;
  left: 684px;
  top: 496px;
  width: 186px;
  padding: 0 2px 1px;
  border: 3px solid #5fa02b;
  background: #fff;
  box-shadow: 4px 4px 4px rgba(0, 0, 0, .5);
  font-size: 19px;
  line-height: 22px;
  color: #f00;
}
```
